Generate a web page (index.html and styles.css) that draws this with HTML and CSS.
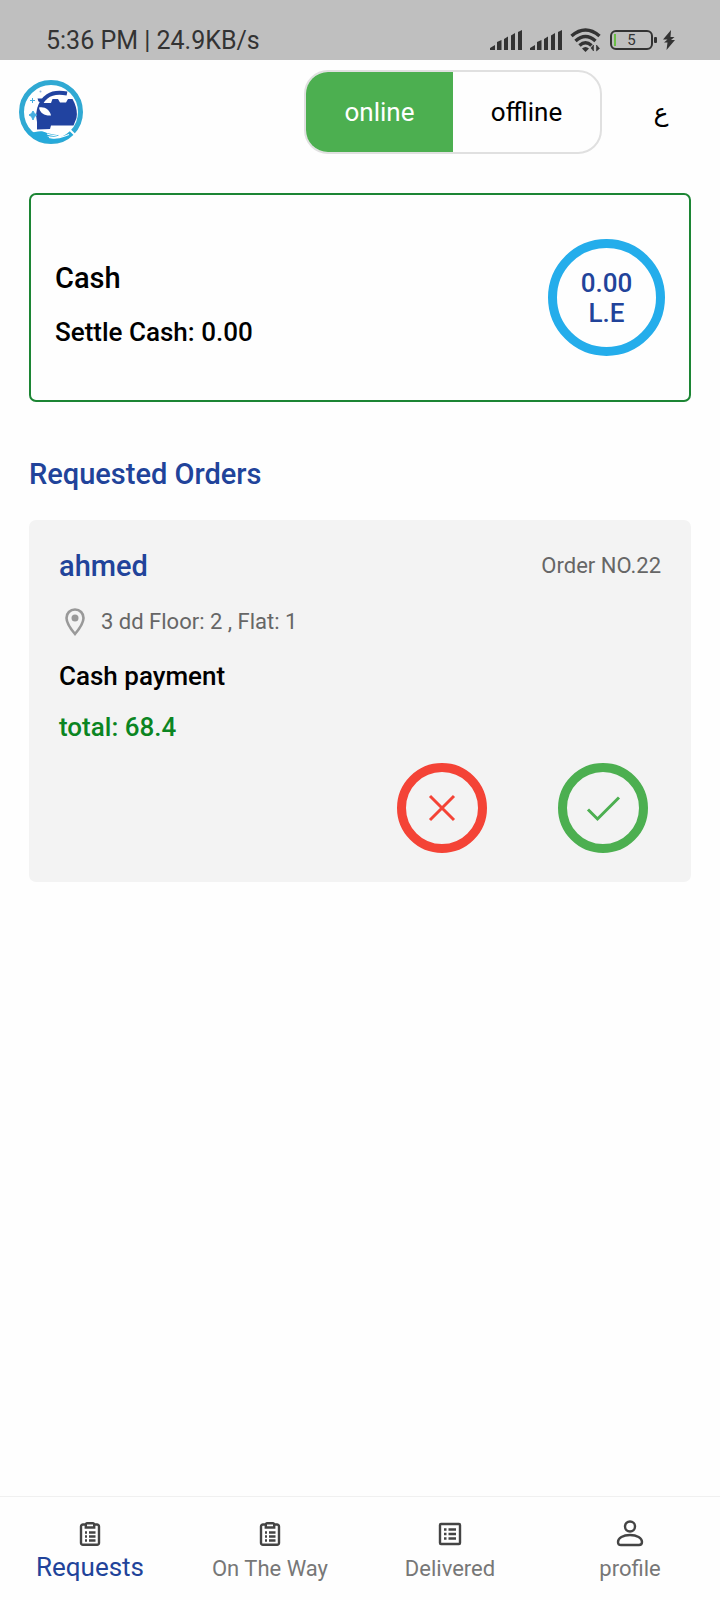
FILE: index.html
```html
<!DOCTYPE html>
<html lang="en">
<head>
<meta charset="utf-8">
<meta name="viewport" content="width=device-width, initial-scale=1">
<title>Requested Orders</title>
<link rel="stylesheet" href="styles.css">
</head>
<body>
<div class="app">
  <div class="status">
    <span class="status-text">5:36 PM | 24.9KB/s</span>
    <div class="status-icons">
      <svg class="signal" viewBox="0 0 32 22" aria-hidden="true"><path d="M0 21v-2l5-3v5zM7 21v-8l4.500-2v10zM14 21V10l4-2.500V21zM21 21V6.500L25 4v17zM28 21V3l4-2v20z"/></svg>
      <svg class="signal" viewBox="0 0 32 22" aria-hidden="true"><path d="M0 21v-2l5-3v5zM7 21v-8l4.500-2v10zM14 21V10l4-2.500V21zM21 21V6.500L25 4v17zM28 21V3l4-2v20z"/></svg>
      <svg class="wifi" viewBox="0 0 32 24" aria-hidden="true"><g fill="none" stroke="#333" stroke-width="3.500"><path d="M1.500 8Q15.500-4 29.500 8"/><path d="M5.500 13Q15.500 4 25.500 13"/><path d="M9.500 17.500Q15.500 12 21.500 17.500"/></g><path d="M12 20.500q3.500-3 7 0L15.500 24z"/><path d="M21 20l2.500 3V17zM29.500 20.500L26.500 17v6z" stroke="#333" stroke-width=".6"/></svg>
      <span class="battery"><span class="battery-level"></span>5</span>
      <svg class="bolt" viewBox="0 0 12 20" aria-hidden="true"><path d="M8 0L0 9.500h4.500L1 12.500h3.500L3.500 20 12 10H8l3.500-3H7.500z"/></svg>
    </div>
  </div>

  <header class="topbar">
    <svg class="logo" viewBox="0 0 64 64" role="img" aria-label="Car wash logo">
      <circle cx="32" cy="32" r="29.500" fill="#fff" stroke="#30a9d3" stroke-width="5"/>
      <path d="M5 48c3 4 7 5 11 4 5-1 8-1 12 1 4 1.500 8 1 12 2-3 2.500-7 1.500-12 1 6 4 13 2 17 0l7-3c2-.5 2 1 1 2l-5 4C38 64 22 65 12 56 8 53 6 50 5 48z" fill="#25aadb"/>
      <path d="M28 54c4 1.500 9 2 12-.5M30 57.500c8 2.500 14-1 20-3" fill="none" stroke="#fff" stroke-width="1.200"/>
      <path d="M50 49l6 6" stroke="#fff" stroke-width="2"/>
      <path d="M18 49.500V42l-1-7 1-6 4-6 10 0 1.500-4H39l2 3.500h6l2-3.500h4.500l2 4c2 5 3 10 2 15l-3 7.500H32L31 49z" fill="#2143a0"/>
      <path d="M20 29c3-11 11-19 28-15.500" fill="none" stroke="#2143a0" stroke-width="4"/>
      <path d="M18.500 18.500h5l-1.500 4-2.500-1z" fill="#2143a0"/>
      <path d="M20 27.500c5-1.500 11 2 12 8C26 36 21 33.500 20 27.500z" fill="#fff"/>
      <path d="M14 31l1.500 2.500L18 35l-2.500 1.500L14 40l-1.500-3.500L10 35l2.500-1.500z" fill="#46aee0" stroke="#46aee0"/>
      <path d="M13.500 18v5M11 20.500h5" stroke="#46aee0"/>
      <circle cx="21.500" cy="11.500" r="1" fill="#8eb4dd"/>
    </svg>
    <div class="toggle" role="group" aria-label="Availability">
      <button class="toggle-option toggle-option--on" type="button" aria-pressed="true">online</button>
      <button class="toggle-option" type="button" aria-pressed="false">offline</button>
    </div>
    <button class="language" type="button" lang="ar">ع</button>
  </header>

  <main class="content">
    <section class="cash">
      <div class="cash-info">
        <h2 class="title cash-title">Cash</h2>
        <p class="strong">Settle Cash: 0.00</p>
      </div>
      <div class="amount"><span>0.00</span><span>L.E</span></div>
    </section>

    <h1 class="title section-title">Requested Orders</h1>

    <article class="order">
      <div class="order-head">
        <h2 class="title">ahmed</h2>
        <span class="muted">Order NO.22</span>
      </div>
      <div class="address">
        <svg class="pin" viewBox="0 0 20 28" aria-hidden="true"><path d="M10 1.500C5 1.500 1.500 5.300 1.500 10c0 6 8.500 16 8.500 16s8.500-10 8.500-16C18.500 5.300 15 1.500 10 1.500z" fill="none" stroke="#999" stroke-width="2.600"/><circle cx="10" cy="10" r="3.500" fill="#999"/></svg>
        <span class="muted">3 dd Floor: 2 , Flat: 1</span>
      </div>
      <p class="strong payment">Cash payment</p>
      <p class="strong total">total: 68.4</p>
      <div class="actions">
        <button class="action action--reject" type="button" aria-label="Reject order"><svg class="action-icon" viewBox="0 0 36 36"><path d="M6 6l24 24M30 6L6 30"/></svg></button>
        <button class="action action--accept" type="button" aria-label="Accept order"><svg class="action-icon" viewBox="0 0 36 36"><path d="M3 19.500l9.500 9.500L34 7.500"/></svg></button>
      </div>
    </article>
  </main>

  <nav class="tabs">
    <a class="tab tab--current" href="#requests" aria-current="page">
      <svg class="tab-icon" viewBox="0 0 28 28"><path d="M9 4.500H7a2 2 0 0 0-2 2V23a1.800 1.800 0 0 0 1.800 1.800h14.400A1.800 1.800 0 0 0 23 23V6.500a2 2 0 0 0-2-2h-2M9.800 4a1.500 1.500 0 0 1 1.200-.8h6a1.500 1.500 0 0 1 1.200.8v3.500H9.800z"/><path d="M9 12.500h2m2 0h6.500m-10.500 4h2m2 0h6.500m-10.500 4h2m2 0h6.500"/></svg>
      <span>Requests</span>
    </a>
    <a class="tab" href="#on-the-way">
      <svg class="tab-icon" viewBox="0 0 28 28"><path d="M9 4.500H7a2 2 0 0 0-2 2V23a1.800 1.800 0 0 0 1.800 1.800h14.400A1.800 1.800 0 0 0 23 23V6.500a2 2 0 0 0-2-2h-2M9.800 4a1.500 1.500 0 0 1 1.200-.8h6a1.500 1.500 0 0 1 1.200.8v3.500H9.800z"/><path d="M9 12.500h2m2 0h6.500m-10.500 4h2m2 0h6.500m-10.500 4h2m2 0h6.500"/></svg>
      <span>On The Way</span>
    </a>
    <a class="tab" href="#delivered">
      <svg class="tab-icon" viewBox="0 0 28 28"><rect x="4" y="4" width="20" height="20" rx="1"/><path d="M8 9.500h2.500m2 0h7.500m-12 4.500h2.500m2 0h7.500m-12 4.500h2.500m2 0h7.500"/></svg>
      <span>Delivered</span>
    </a>
    <a class="tab" href="#profile">
      <svg class="tab-icon" viewBox="0 0 28 28"><circle cx="14" cy="6.500" r="5"/><path d="M2 22c0-4 5-7 12-7s12 3 12 7c0 2-1 3-3 3H5c-2 0-3-1-3-3z"/></svg>
      <span>profile</span>
    </a>
  </nav>
</div>
</body>
</html>
```
FILE: styles.css
```css
* {
  box-sizing: border-box;
}

body,
h1,
h2,
p {
  margin: 0;
}

body {
  background: #fefefe;
  color: #000;
  font-family: Roboto, "Liberation Sans", sans-serif;
}

button {
  padding: 0;
  border: 0;
  background: none;
  color: inherit;
  font: inherit;
  cursor: pointer;
}

.app {
  display: flex;
  flex-direction: column;
  min-height: 100vh;
}

.status {
  display: flex;
  justify-content: space-between;
  align-items: flex-end;
  height: 60px;
  padding: 0 45px 4px 46px;
  background: #bfbfbf;
  color: #333;
  font-size: 25px;
  line-height: 30px;
}

.status-icons {
  display: flex;
  align-items: center;
  gap: 8px;
  height: 32px;
  fill: #333;
}

.signal {
  width: 32px;
  height: 22px;
}

.wifi {
  width: 32px;
  height: 24px;
}

.battery {
  position: relative;
  width: 43px;
  height: 20px;
  border: 2px solid #333;
  border-radius: 6px;
  font-size: 15px;
  line-height: 17px;
  text-align: center;
}

.battery::after {
  content: "";
  position: absolute;
  top: 5px;
  right: -6px;
  width: 3px;
  height: 6px;
  border-radius: 1px;
  background: #333;
}

.battery-level {
  position: absolute;
  top: 2px;
  bottom: 2px;
  left: 2px;
  width: 2px;
  background: #6abf45;
}

.bolt {
  width: 12px;
  height: 20px;
  margin-left: 2px;
}

.topbar {
  display: flex;
  align-items: center;
  padding: 10px 0 10px 19px;
}

.logo {
  width: 64px;
  height: 64px;
  margin-right: auto;
}

.toggle {
  display: grid;
  grid-template-columns: 1fr 1fr;
  width: 298px;
  height: 84px;
  border: 2px solid #e0e0e0;
  border-radius: 24px;
  overflow: hidden;
  font-size: 26px;
}

.toggle-option--on {
  background: #4caf50;
  color: #fff;
}

.language {
  width: 118px;
  height: 64px;
  font-family: "DejaVu Sans Mono", monospace;
  font-size: 25px;
}

.content {
  flex: 1;
  padding: 29px 29px 24px;
}

.title {
  color: #21439a;
  font-size: 29px;
  font-weight: 500;
  line-height: 36px;
}

.strong {
  font-size: 26px;
  font-weight: 500;
  line-height: 32px;
}

.muted {
  color: #666;
  font-size: 22px;
  line-height: 32px;
}

.cash {
  display: flex;
  justify-content: space-between;
  align-items: center;
  min-height: 209px;
  padding: 24px;
  border: 2px solid #1c8534;
  border-radius: 7px;
}

.cash-info {
  display: grid;
  gap: 20px;
  padding-top: 12px;
}

.cash-title {
  color: #000;
}

.amount {
  display: flex;
  flex-direction: column;
  align-items: center;
  justify-content: center;
  width: 117px;
  height: 117px;
  border: 9px solid #24adeb;
  border-radius: 50%;
  color: #21439a;
  font-size: 26px;
  font-weight: 500;
  line-height: 30px;
}

.section-title {
  margin: 54px 0 28px;
}

.order {
  padding: 28px 30px 29px;
  border-radius: 7px;
  background: #f3f3f3;
}

.order-head {
  display: flex;
  justify-content: space-between;
  align-items: center;
}

.address {
  display: flex;
  align-items: center;
  gap: 16px;
  margin-top: 22px;
  padding-left: 6px;
}

.pin {
  width: 20px;
  height: 28px;
}

.payment {
  margin-top: 22px;
}

.total {
  margin-top: 19px;
  color: #0b8522;
}

.actions {
  display: flex;
  justify-content: flex-end;
  gap: 71px;
  margin-top: 20px;
  padding-right: 13px;
}

.action {
  display: grid;
  place-items: center;
  width: 90px;
  height: 90px;
  border: 9px solid;
  border-radius: 50%;
}

.action--reject {
  color: #f44336;
}

.action--accept {
  color: #4caf50;
}

.action-icon {
  width: 36px;
  height: 36px;
  fill: none;
  stroke: currentColor;
  stroke-width: 3;
}

.tabs {
  display: grid;
  grid-template-columns: repeat(4, 1fr);
  height: 104px;
  padding-top: 23px;
  border-top: 1px solid #f0f0f0;
}

.tab {
  display: flex;
  flex-direction: column;
  align-items: center;
  color: #777;
  font-size: 22px;
  line-height: 42px;
  text-decoration: none;
}

.tab--current {
  color: #21439a;
  font-size: 26px;
  line-height: 38px;
}

.tab-icon {
  width: 28px;
  height: 28px;
  fill: none;
  stroke: #444;
  stroke-width: 2.4;
}
```
